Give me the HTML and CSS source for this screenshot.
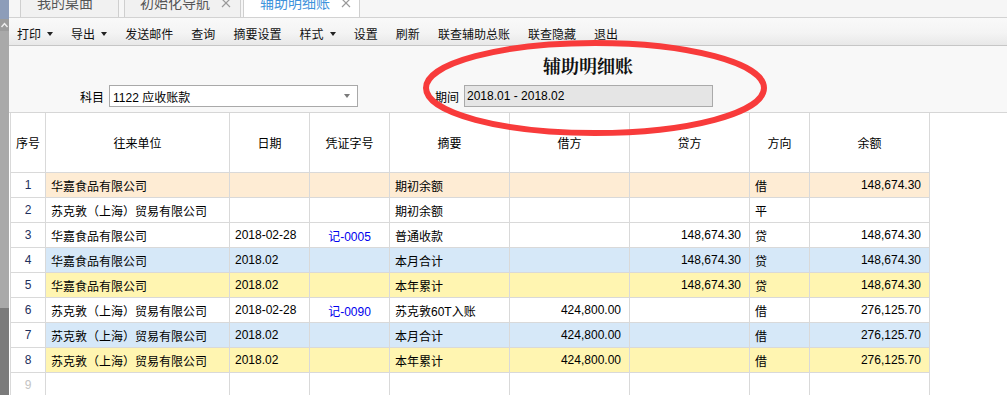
FILE: index.html
```html
<!DOCTYPE html>
<html lang="zh-CN">
<head>
<meta charset="utf-8">
<title>辅助明细账</title>
<link rel="stylesheet" href="styles.css">
</head>
<body>
<div class="app">
  <div class="strip">
    <div class="strip-top"></div>
    <div class="strip-btn"><svg width="9" height="8" viewBox="0 0 9 8"><path d="M1.5 6 L4.5 2.5 L7.5 6" fill="none" stroke="#eeeeee" stroke-width="1.4"/></svg></div>
    <div class="strip-mid"></div>
    <div class="strip-bot"></div>
  </div>
  <div class="main">
    <div class="tabbar">
      <div class="tab tab1"><span class="tab-label">我的桌面</span></div>
      <div class="tab tab2"><span class="tab-label">初始化导航</span><svg class="tab-x" width="10" height="10" viewBox="0 0 10 10"><path d="M1 1 L9 9 M9 1 L1 9" stroke="#9a9a9a" stroke-width="1.2"/></svg></div>
      <div class="tab tab3 active"><span class="tab-label">辅助明细账</span><svg class="tab-x" width="10" height="10" viewBox="0 0 10 10"><path d="M1 1 L9 9 M9 1 L1 9" stroke="#9a9a9a" stroke-width="1.2"/></svg></div>
    </div>
    <div class="toolbar">
      <span class="tool">打印<i class="caret"></i></span>
      <span class="tool">导出<i class="caret"></i></span>
      <span class="tool">发送邮件</span>
      <span class="tool">查询</span>
      <span class="tool">摘要设置</span>
      <span class="tool">样式<i class="caret"></i></span>
      <span class="tool">设置</span>
      <span class="tool">刷新</span>
      <span class="tool">联查辅助总账</span>
      <span class="tool">联查隐藏</span>
      <span class="tool">退出</span>
    </div>
    <div class="head">
      <div class="title">辅助明细账</div>
      <div class="form">
        <span class="lbl">科目</span>
        <div class="select"><span>1122 应收账款</span><i class="sel-caret"></i></div>
        <span class="lbl lbl2">期间</span>
        <div class="input">2018.01 - 2018.02</div>
      </div>
    </div>
    <div class="grid">
      <div class="row hdr">
        <div class="cell c-no">序号</div>
        <div class="cell ctr">往来单位</div>
        <div class="cell ctr">日期</div>
        <div class="cell ctr">凭证字号</div>
        <div class="cell ctr">摘要</div>
        <div class="cell ctr">借方</div>
        <div class="cell ctr">贷方</div>
        <div class="cell ctr">方向</div>
        <div class="cell ctr">余额</div>
      </div>
      <div class="row peach">
        <div class="cell c-no">1</div>
        <div class="cell">华嘉食品有限公司</div>
        <div class="cell"></div>
        <div class="cell ctr"></div>
        <div class="cell">期初余额</div>
        <div class="cell num"></div>
        <div class="cell num"></div>
        <div class="cell">借</div>
        <div class="cell num">148,674.30</div>
      </div>
      <div class="row">
        <div class="cell c-no">2</div>
        <div class="cell">苏克敦（上海）贸易有限公司</div>
        <div class="cell"></div>
        <div class="cell ctr"></div>
        <div class="cell">期初余额</div>
        <div class="cell num"></div>
        <div class="cell num"></div>
        <div class="cell">平</div>
        <div class="cell num"></div>
      </div>
      <div class="row">
        <div class="cell c-no">3</div>
        <div class="cell">华嘉食品有限公司</div>
        <div class="cell">2018-02-28</div>
        <div class="cell ctr link">记-0005</div>
        <div class="cell">普通收款</div>
        <div class="cell num"></div>
        <div class="cell num">148,674.30</div>
        <div class="cell">贷</div>
        <div class="cell num">148,674.30</div>
      </div>
      <div class="row blue">
        <div class="cell c-no">4</div>
        <div class="cell">华嘉食品有限公司</div>
        <div class="cell">2018.02</div>
        <div class="cell ctr"></div>
        <div class="cell">本月合计</div>
        <div class="cell num"></div>
        <div class="cell num">148,674.30</div>
        <div class="cell">贷</div>
        <div class="cell num">148,674.30</div>
      </div>
      <div class="row yellow">
        <div class="cell c-no">5</div>
        <div class="cell">华嘉食品有限公司</div>
        <div class="cell">2018.02</div>
        <div class="cell ctr"></div>
        <div class="cell">本年累计</div>
        <div class="cell num"></div>
        <div class="cell num">148,674.30</div>
        <div class="cell">贷</div>
        <div class="cell num">148,674.30</div>
      </div>
      <div class="row">
        <div class="cell c-no">6</div>
        <div class="cell">苏克敦（上海）贸易有限公司</div>
        <div class="cell">2018-02-28</div>
        <div class="cell ctr link">记-0090</div>
        <div class="cell">苏克敦60T入账</div>
        <div class="cell num">424,800.00</div>
        <div class="cell num"></div>
        <div class="cell">借</div>
        <div class="cell num">276,125.70</div>
      </div>
      <div class="row blue">
        <div class="cell c-no">7</div>
        <div class="cell">苏克敦（上海）贸易有限公司</div>
        <div class="cell">2018.02</div>
        <div class="cell ctr"></div>
        <div class="cell">本月合计</div>
        <div class="cell num">424,800.00</div>
        <div class="cell num"></div>
        <div class="cell">借</div>
        <div class="cell num">276,125.70</div>
      </div>
      <div class="row yellow">
        <div class="cell c-no">8</div>
        <div class="cell">苏克敦（上海）贸易有限公司</div>
        <div class="cell">2018.02</div>
        <div class="cell ctr"></div>
        <div class="cell">本年累计</div>
        <div class="cell num">424,800.00</div>
        <div class="cell num"></div>
        <div class="cell">借</div>
        <div class="cell num">276,125.70</div>
      </div>
      <div class="row empty">
        <div class="cell c-no">9</div>
        <div class="cell"></div>
        <div class="cell"></div>
        <div class="cell"></div>
        <div class="cell"></div>
        <div class="cell"></div>
        <div class="cell"></div>
        <div class="cell"></div>
        <div class="cell"></div>
      </div>
    </div>
  </div>
  <svg class="annot" width="1007" height="395" viewBox="0 0 1007 395">
    <ellipse cx="595" cy="88" rx="169" ry="45" fill="none" stroke="#f83b3b" stroke-width="6"/>
  </svg>
</div>
</body>
</html>
```

FILE: styles.css
```css
html, body {
  margin: 0;
  padding: 0;
}
body {
  width: 1007px;
  height: 395px;
  overflow: hidden;
  font-family: "Liberation Sans", "Noto Sans CJK SC", sans-serif;
  font-size: 12px;
  color: #000;
  background: #fff;
}
.app {
  position: relative;
  display: flex;
  width: 1007px;
  height: 395px;
  overflow: hidden;
}
.strip {
  width: 9px;
  flex: none;
  display: flex;
  flex-direction: column;
  background: #a9a9a9;
}
.strip-top {
  height: 19px;
  background: #8d9db9;
}
.strip-btn {
  height: 12px;
  background: #9c9c9c;
  display: flex;
  align-items: center;
  justify-content: center;
}
.strip-mid {
  height: 277px;
  background: #a9a9a9;
}
.strip-bot {
  flex: 1;
  background: #7b7b7b;
}
.main {
  flex: 1;
  display: flex;
  flex-direction: column;
  min-width: 0;
}
/* tabs */
.tabbar {
  height: 17px;
  flex: none;
  border-bottom: 1px solid #d2d2d2;
  background: #f6f6f6;
  display: flex;
  padding-left: 11px;
  overflow: hidden;
}
.tab {
  box-sizing: border-box;
  height: 18px;
  border: 1px solid #cfcfcf;
  border-top: none;
  background: #f1f1f1;
  display: flex;
  align-items: flex-start;
  font-size: 14px;
  color: #555;
  overflow: hidden;
}
.tab-label {
  line-height: 14px;
  margin-top: -4px;
  white-space: nowrap;
}
.tab1 {
  width: 99px;
  padding-left: 16px;
}
.tab2 {
  width: 117px;
  margin-left: 5px;
  padding-left: 15px;
}
.tab3 {
  width: 117px;
  margin-left: 2px;
  padding-left: 16px;
}
.tab.active {
  background: #fff;
  color: #3f93dc;
  border-bottom: none;
}
.tab-x {
  margin-left: 11px;
  margin-top: -2px;
  flex: none;
}
/* toolbar */
.toolbar {
  box-sizing: border-box;
  height: 28px;
  flex: none;
  padding: 4px 0 0 8px;
  border-bottom: 1px solid #c6c6c6;
  background: linear-gradient(#f9f9f9 0%, #f4f4f4 55%, #e8e8e8 100%);
  display: flex;
  align-items: center;
  gap: 18.1px;
  font-family: "Noto Sans CJK SC", sans-serif;
  font-size: 12px;
  color: #111;
}
.tool {
  display: flex;
  align-items: center;
  line-height: 16px;
  white-space: nowrap;
}
.caret {
  display: inline-block;
  width: 0;
  height: 0;
  margin-left: 6px;
  border-left: 3.5px solid transparent;
  border-right: 3.5px solid transparent;
  border-top: 4px solid #222;
}
/* header */
.head {
  height: 66px;
  flex: none;
  background: #f8f8f8;
  box-sizing: border-box;
  padding-top: 9px;
}
.title {
  margin-left: 534px;
  height: 20px;
  line-height: 20px;
  font-family: "Noto Serif CJK SC", "Noto Sans CJK SC", serif;
  font-weight: bold;
  font-size: 18px;
  color: #111;
  white-space: nowrap;
}
.form {
  margin-top: 10px;
  display: flex;
  align-items: center;
  padding-left: 71px;
  height: 22px;
}
.lbl {
  width: 24px;
  margin-right: 5px;
  font-family: "Noto Sans CJK SC", sans-serif;
  font-size: 12px;
  white-space: nowrap;
}
.lbl2 {
  margin-left: 77px;
}
.select {
  box-sizing: border-box;
  width: 249px;
  height: 22px;
  border: 1px solid #a9a9a9;
  background: #fff;
  display: flex;
  align-items: center;
  justify-content: space-between;
  padding: 0 7px 0 3px;
}
.sel-caret {
  width: 0;
  height: 0;
  border-left: 3.5px solid transparent;
  border-right: 3.5px solid transparent;
  border-top: 4px solid #7a7a7a;
}
.input {
  box-sizing: border-box;
  width: 249px;
  height: 22px;
  border: 1px solid #aaaaaa;
  background: #e5e5e5;
  display: flex;
  align-items: center;
  padding-left: 2px;
}
/* grid */
.grid {
  flex: 1;
  background: #fff;
  border-top: 1px solid #d6d6d6;
  padding-left: 1px;
}
.row {
  display: grid;
  grid-template-columns: 35px 184px 80px 80px 120px 120px 120px 60px 120px;
  justify-content: start;
  border-left: 1px solid #d9d9d9;
  height: 25px;
}
.row.hdr {
  height: 60px;
}
.cell {
  box-sizing: border-box;
  border-right: 1px solid #d9d9d9;
  border-bottom: 1px solid #d9d9d9;
  display: flex;
  align-items: center;
  padding: 0 5px;
  white-space: nowrap;
  overflow: hidden;
}
.cell.ctr {
  justify-content: center;
  padding: 0;
}
.cell.num {
  justify-content: flex-end;
  padding: 0 8px 0 0;
}
.cell.c-no {
  justify-content: center;
  padding: 0;
  color: #1e2f5c;
  background: #fff;
}
.hdr .cell.c-no {
  color: #000;
}
.link {
  color: #0000ee;
}
.peach .cell:not(.c-no) {
  background: #feecd4;
}
.blue .cell:not(.c-no) {
  background: #d6e8f8;
}
.yellow .cell:not(.c-no) {
  background: #fff5b1;
}
.empty .cell.c-no {
  color: #c4c4c4;
}
/* annotation overlay */
.annot {
  position: absolute;
  left: 0;
  top: 0;
  pointer-events: none;
}
```
